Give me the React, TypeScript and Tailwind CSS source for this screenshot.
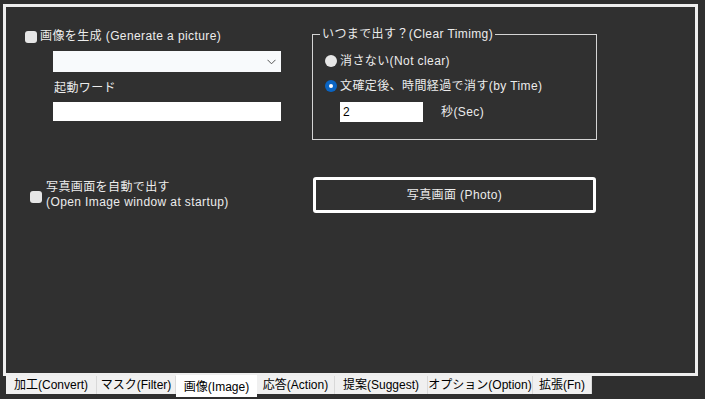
const tabs = [
  { label: '加工(Convert)', w: 'w-[91px]' },
  { label: 'マスク(Filter)', w: 'w-[79px]' },
  { label: '画像(Image)', w: 'w-[81px]', active: true },
  { label: '応答(Action)', w: 'w-[78px]' },
  { label: '提案(Suggest)', w: 'w-[93px]' },
  { label: 'オプション(Option)', w: 'w-[105px]' },
  { label: '拡張(Fn)', w: 'w-[59px]' },
]

function CheckBox() {
  return <span className="block w-[12px] h-[12px] rounded-[3px] bg-[#e6e6e6] shrink-0" />
}

function Radio({ checked }: { checked?: boolean }) {
  return checked ? (
    <span className="flex items-center justify-center w-[12px] h-[12px] rounded-full bg-[#0a64c2] shrink-0">
      <span className="block w-[4px] h-[4px] rounded-full bg-white" />
    </span>
  ) : (
    <span className="block w-[12px] h-[12px] rounded-full bg-[#e6e6e6] shrink-0" />
  )
}

export default function App() {
  return (
    <div
      className="w-[705px] h-[399px] bg-[#2f2f2f] overflow-hidden text-[12px] leading-[16px] text-[#ececec] whitespace-nowrap"
      style={{ fontFamily: '"Liberation Sans", "Noto Sans CJK JP", sans-serif' }}
    >
      <div className="ml-[3px] mt-[4px] w-[695px] h-[372px] border-[3px] border-[#eeeeee] bg-[#303030] tracking-[0.4px]">
        {/* top section */}
        <div className="flex">
          <div className="w-[306px] shrink-0">
            <div className="mt-[21px] pl-[19px] flex items-center gap-[3px]">
              <span className="mt-[1px]">
                <CheckBox />
              </span>
              <span>画像を生成 (Generate a picture)</span>
            </div>
            <div className="mt-[7px] ml-[47px] w-[228px] h-[21px] bg-[#f8fafc] flex items-center justify-end pr-[5px]">
              <svg width="9" height="6" viewBox="0 0 9 6" fill="none">
                <path d="M0.5 0.8 L4.5 4.8 L8.5 0.8" stroke="#555" strokeWidth="1" />
              </svg>
            </div>
            <div className="mt-[8px] ml-[48px]">起動ワード</div>
            <div className="mt-[6px] ml-[47px] w-[228px] h-[19px] bg-white" />
          </div>

          <div className="relative mt-[27px] w-[285px] h-[106px] border border-[#d4d4d4]">
            <span className="absolute -top-[9px] left-[7px] px-[2px] bg-[#303030] leading-[16px]">
              いつまで出す？(Clear Timimg)
            </span>
            <div className="pt-[18px] pl-[12px] flex items-center gap-[3px]">
              <Radio />
              <span>消さない(Not clear)</span>
            </div>
            <div className="mt-[9px] pl-[12px] flex items-center gap-[3px]">
              <Radio checked />
              <span>文確定後、時間経過で消す(by Time)</span>
            </div>
            <div className="mt-[8px] pl-[27px] flex items-center gap-[18px]">
              <div className="w-[83px] h-[20px] bg-white text-black pl-[3px] flex items-center">2</div>
              <span>秒(Sec)</span>
            </div>
          </div>
        </div>

        {/* bottom section */}
        <div className="mt-[37px] flex items-center">
          <div className="w-[307px] shrink-0 pl-[24px] flex items-center gap-[4px]">
            <span className="mt-[4px]">
              <CheckBox />
            </span>
            <div className="leading-[15px]">
              <div>写真画面を自動で出す</div>
              <div>(Open Image window at startup)</div>
            </div>
          </div>
          <button className="w-[283px] h-[36px] border-[3px] border-white rounded-[3px] bg-[#303030] text-[#ececec] flex items-center justify-center">
            写真画面 (Photo)
          </button>
        </div>
      </div>

      {/* tabs */}
      <div className="ml-[6px] flex items-start">
        {tabs.map(t =>
          t.active ? (
            <div
              key={t.label}
              className={`${t.w} h-[22px] -mt-[1px] bg-white text-black flex items-center justify-center pt-[1px]`}
            >
              {t.label}
            </div>
          ) : (
            <div
              key={t.label}
              className={`${t.w} h-[18px] bg-[#f0f0f0] text-black border-r border-[#d9d9d9] flex items-center justify-center`}
            >
              {t.label}
            </div>
          )
        )}
      </div>
    </div>
  )
}
